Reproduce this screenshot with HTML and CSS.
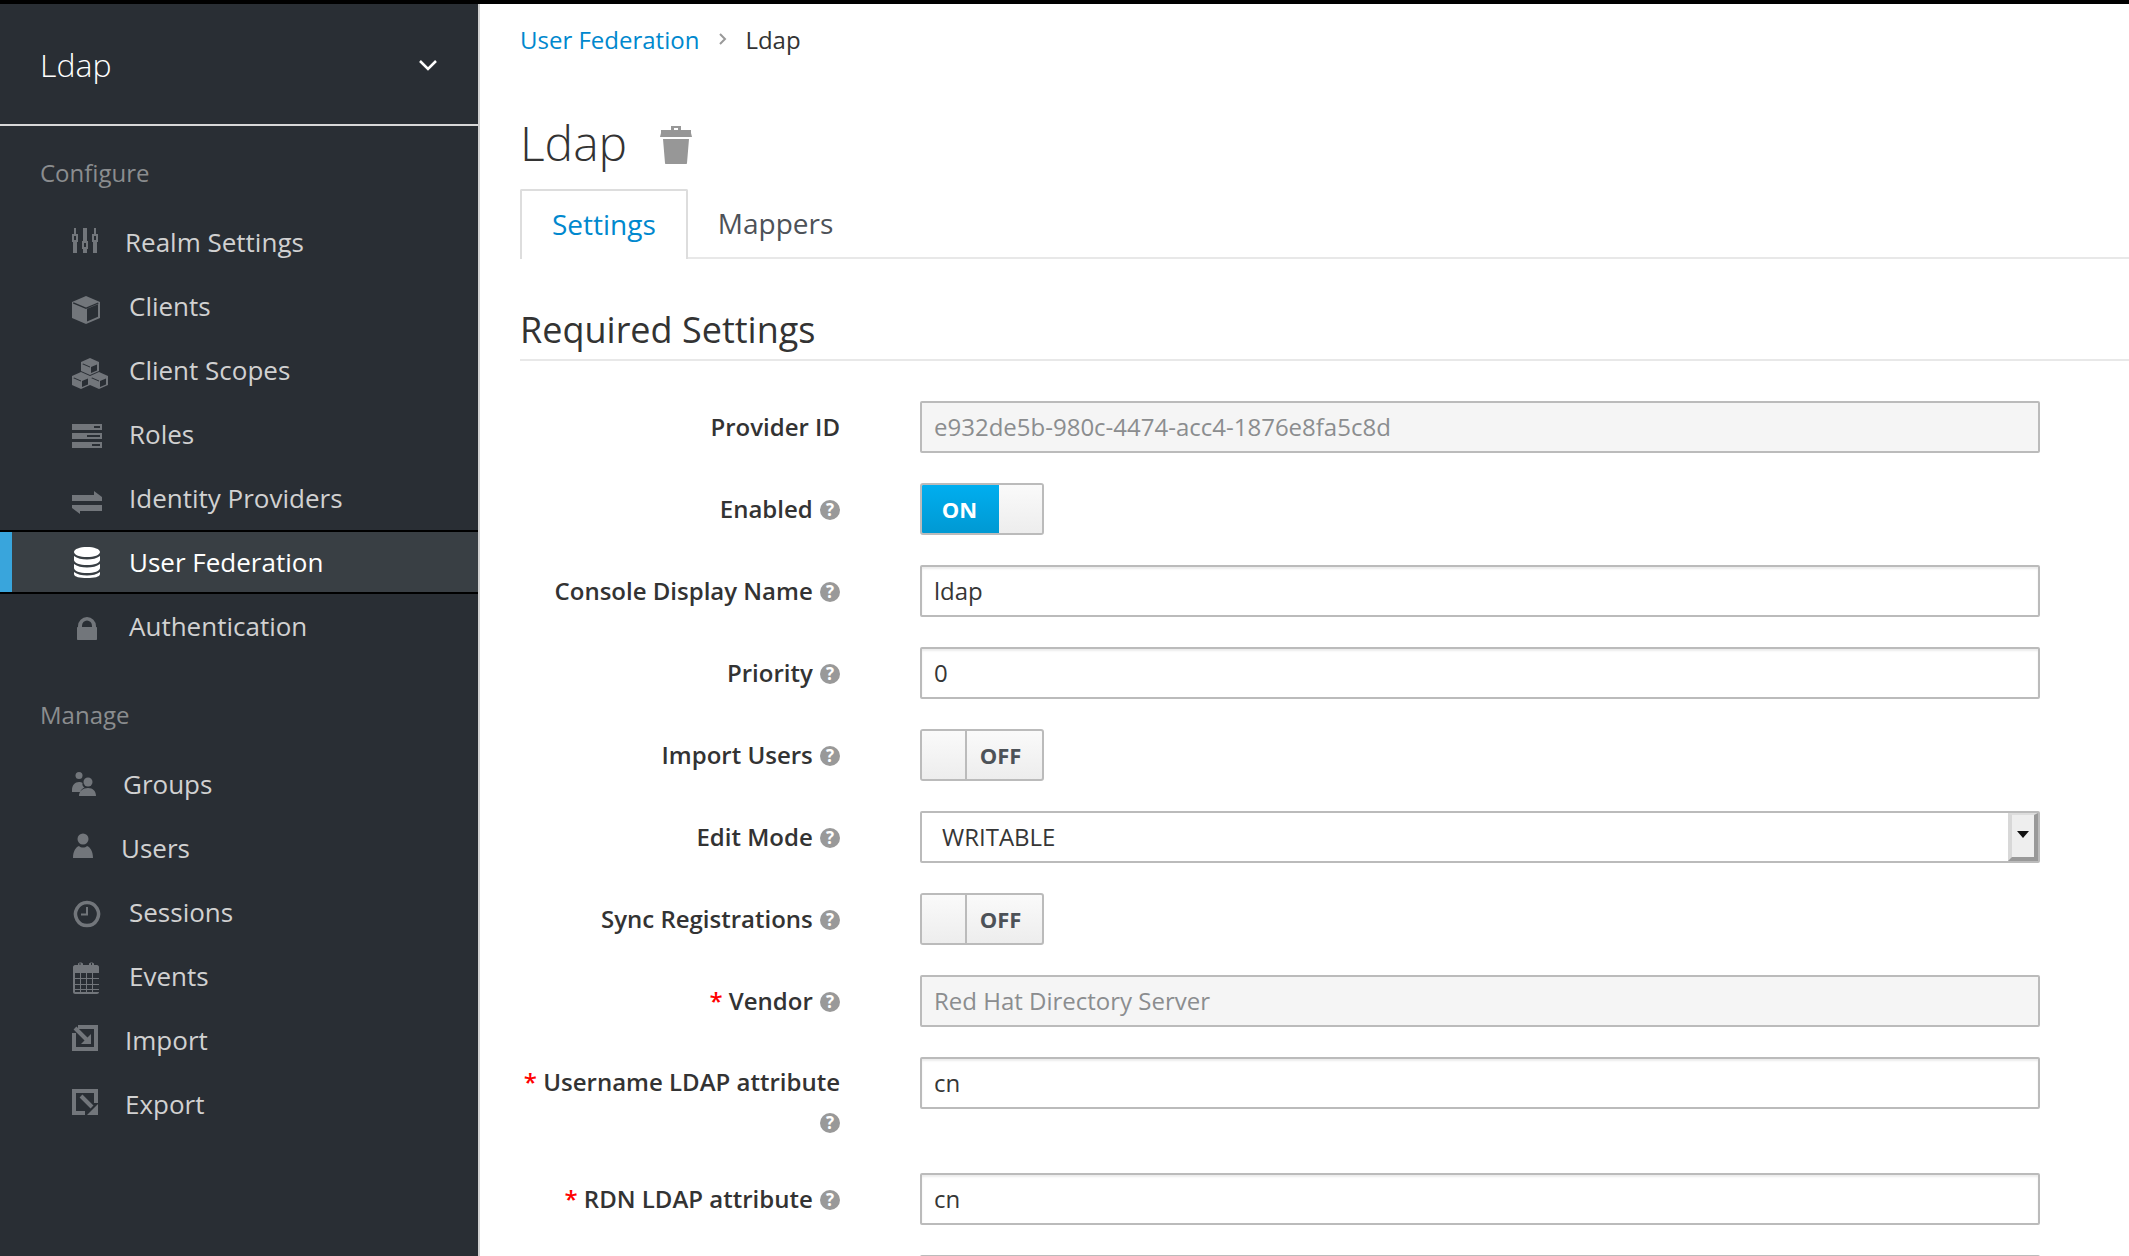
FILE: index.html
```html
<!DOCTYPE html>
<html>
<head>
    <title>Ldap</title>
    <link rel="stylesheet" href="styles.css">
</head>
<body>
    <div class="page">
        <aside class="sidebar">
            <div class="realm">
                <span class="realm-name">Ldap</span>
                <svg class="realm-caret" width="20" height="12" viewBox="0 0 20 12"><path d="M2 2l8 8 8-8" /></svg>
            </div>

            <div class="nav-section">
                <h2 class="nav-title">Configure</h2>
                <a class="nav-item gap-13">
                    <svg class="nav-icon" width="40" height="64" viewBox="0 0 40 64"><path d="M2 18h2v6H2zM0 24h6v8H0zM1 32h4v11H1zM11 18h4v13h-4zM10 31h6v8h-6zM11 39h4v4h-4zM22 18h2v6h-2zM20 24h6v8h-6zM21 32h4v11h-4z" /><path class="cut" d="M2 26h2v4H2zM12 33h2v4h-2zM22 26h2v4h-2z" /></svg>
                    Realm Settings
                </a>
                <a class="nav-item gap-17">
                    <svg class="nav-icon" width="40" height="64" viewBox="0 0 40 64"><path d="M14 22l14 6v16l-14 6-14-6V28z" /><path class="cut" d="M15 34.500l11-4.700v13l-11 4.700zM14 33.500L1.500 28.200l-.600 1.200L14 35zM14 33.500l.5 1.500 12-5-.5-1.500z" /></svg>
                    Clients
                </a>
                <a class="nav-item gap-17">
                    <svg class="nav-icon" width="40" height="64" viewBox="0 0 40 64"><path d="M18 20l9 4v9l-9 4-9-4v-9zM9 34l9 4v9l-9 4-9-4v-9zM27 34l9 4v9l-9 4-9-4v-9z" /><path class="cut" d="M19 29l6-2.600v6l-6 2.600zM10 43l6-2.600v6L10 49zM28 43l6-2.600v6L28 49zM9 42.500l-7-3-.600.800 7.600 3.300zM18 28.500l-7-3-.600.800 7.600 3.300zM27 42.500l-7-3-.600.800 7.600 3.300z" /></svg>
                    Client Scopes
                </a>
                <a class="nav-item gap-17">
                    <svg class="nav-icon" width="40" height="64" viewBox="0 0 40 64"><path d="M0 22h30v6H0zM0 31h30v6H0zM0 40h30v6H0z" /><path class="cut" d="M22 24h6v2h-6zM15 33h13v2H15zM20 42h8v2h-8z" /></svg>
                    Roles
                </a>
                <a class="nav-item gap-17">
                    <svg class="nav-icon" width="40" height="64" viewBox="0 0 40 64"><path d="M0 29h22v-4l8 6v4H0zM30 39v6H8v3l-8-6v-3z" /></svg>
                    Identity Providers
                </a>
                <a class="nav-item nav-item-active gap-17">
                    <svg class="nav-icon" width="40" height="64" viewBox="0 0 40 64"><path d="M15 17c7 0 13 2 13 5s-6 5-13 5-13-2-13-5 6-5 13-5zM2 26c3 2.500 8 3.500 13 3.500S25 28.500 28 26v4c0 3-6 5-13 5S2 33 2 30zM2 34c3 2.500 8 3.500 13 3.500S25 36.500 28 34v4c0 3-6 5-13 5S2 41 2 38zM2 42c3 2.500 8 3.500 13 3.500S25 44.500 28 42v2c0 3-6 4-13 4S2 47 2 44z" /></svg>
                    User Federation
                </a>
                <a class="nav-item gap-17">
                    <svg class="nav-icon" width="40" height="64" viewBox="0 0 40 64"><path d="M6 34v-2a9 9 0 0 1 18 0v2h-4v-2a5 5.500 0 0 0-10 0v2z" /><path d="M6 33h18c.600 0 1 .400 1 1v11c0 .600-.400 1-1 1H6c-.600 0-1-.400-1-1V34c0-.600.400-1 1-1z" /></svg>
                    Authentication
                </a>
            </div>

            <div class="nav-section">
                <h2 class="nav-title">Manage</h2>
                <a class="nav-item gap-11">
                    <svg class="nav-icon" width="40" height="64" viewBox="0 0 40 64"><circle cx="7" cy="23.500" r="3.500" /><circle cx="16" cy="30" r="4.500" /><path d="M0 38c0-5 3-8 7-8 1.500 0 2.500.400 3.500 1-.500 2 .500 4 2 4.500-2 1-3.500 2-4.500 4.500H0zM7 44c0-5 4-8 9-8s8 3 8 8z" /></svg>
                    Groups
                </a>
                <a class="nav-item gap-9">
                    <svg class="nav-icon" width="40" height="64" viewBox="0 0 40 64"><circle cx="11" cy="23" r="5.500" /><path d="M1 42c0-7 3-11 6-12 1 1 2.500 1.500 4 1.500s3-.500 4-1.500c3 1 6 5 6 12z" /></svg>
                    Users
                </a>
                <a class="nav-item gap-17">
                    <svg class="nav-icon" width="40" height="64" viewBox="0 0 40 64"><path class="line" d="M15 22.500a11.500 11.500 0 1 0 .010 0z" /><path class="thin" d="M15 27v7.500H9" /></svg>
                    Sessions
                </a>
                <a class="nav-item gap-17">
                    <svg class="nav-icon" width="40" height="64" viewBox="0 0 40 64"><path d="M3 21h3v-1c0-2 5-2 5 0v1h6v-1c0-2 5-2 5 0v1h3c1 0 2 1 2 2v25c0 1-1 2-2 2H3c-1 0-2-1-2-2V23c0-1 1-2 2-2z" /><path class="cut" d="M3 29h24v19H3z" /><path d="M8 29h1v19H8zM14 29h1v19h-1zM20 29h1v19h-1zM3 34h24v1H3zM3 40h24v1H3zM3 45h24v1H3z" /><path class="cut" d="M7.500 21h1v-2h-1zM19 21h1v-2h-1z" /></svg>
                    Events
                </a>
                <a class="nav-item gap-13">
                    <svg class="nav-icon" width="40" height="64" viewBox="0 0 40 64"><path d="M6 17h20v26H0V25h4v14h18V21H6z" /><path class="wire" d="M3 20l12 12" /><path d="M19 26v10H9z" /></svg>
                    Import
                </a>
                <a class="nav-item gap-13">
                    <svg class="nav-icon" width="40" height="64" viewBox="0 0 40 64"><path d="M0 17h26v14h-4V21H4v18h9v4H0z" /><path class="wire" d="M9 24l11 11" /><path d="M26 32v11H15z" /></svg>
                    Export
                </a>
            </div>
        </aside>

        <main class="content">
            <div class="breadcrumb">
                <a class="crumb-link">User Federation</a>
                <svg class="crumb-sep" width="10" height="14" viewBox="0 0 10 14"><path d="M2 2l5 5-5 5" /></svg>
                <span>Ldap</span>
            </div>

            <div class="page-title">
                <h1>Ldap</h1>
                <svg class="trash" width="32" height="38" viewBox="0 0 32 38"><path d="M11 0h10v4h10v3l1 4H0l1-4V4h10zM14 2v2h4V2zM3 13h26l-2 24c0 .600-.400 1-1 1H6c-.600 0-1-.400-1-1z" /></svg>
            </div>

            <ul class="tabs">
                <li class="tab tab-active">Settings</li>
                <li class="tab">Mappers</li>
            </ul>

            <h2 class="section-title">Required Settings</h2>

            <form class="form">
                <label class="field-label">Provider ID</label>
                <input class="field" type="text" value="e932de5b-980c-4474-acc4-1876e8fa5c8d" disabled>

                <label class="field-label">Enabled <span class="help">?</span></label>
                <div class="toggle toggle-on"><span class="toggle-text">ON</span><span class="toggle-handle"></span></div>

                <label class="field-label">Console Display Name <span class="help">?</span></label>
                <input class="field" type="text" value="ldap">

                <label class="field-label">Priority <span class="help">?</span></label>
                <input class="field" type="text" value="0">

                <label class="field-label">Import Users <span class="help">?</span></label>
                <div class="toggle"><span class="toggle-handle"></span><span class="toggle-text">OFF</span></div>

                <label class="field-label">Edit Mode <span class="help">?</span></label>
                <div class="select">WRITABLE<span class="select-btn"><span class="select-arrow"></span></span></div>

                <label class="field-label">Sync Registrations <span class="help">?</span></label>
                <div class="toggle"><span class="toggle-handle"></span><span class="toggle-text">OFF</span></div>

                <label class="field-label"><span class="req">*</span> Vendor <span class="help">?</span></label>
                <input class="field" type="text" value="Red Hat Directory Server" disabled>

                <label class="field-label field-label-wrap"><span class="req">*</span> Username LDAP attribute <span class="help">?</span></label>
                <input class="field" type="text" value="cn">

                <label class="field-label"><span class="req">*</span> RDN LDAP attribute <span class="help">?</span></label>
                <input class="field" type="text" value="cn">

                <label class="field-label"></label>
                <input class="field" type="text">
            </form>
        </main>
    </div>
</body>
</html>
```

FILE: styles.css
```css
html, body {
    margin: 0;
    height: 100%;
    overflow: hidden;
}

body {
    font-family: "Open Sans", "Noto Sans", Arial, sans-serif;
    background-color: #000;
    color: #333;
    font-size: 24px;
}

.page {
    display: flex;
    height: 1252px;
    margin-top: 4px;
    background-color: #fff;
}

/* sidebar */

.sidebar {
    width: 478px;
    flex-shrink: 0;
    background-color: #292e34;
    border-right: 2px solid #d1d1d1;
    color: #d1d1d1;
}

.realm {
    display: flex;
    align-items: center;
    justify-content: space-between;
    height: 120px;
    padding: 0 40px;
    border-bottom: 2px solid #d8d8d8;
}

.realm-name {
    font-size: 32px;
    font-weight: 300;
    color: #fff;
}

.realm-caret {
    margin-top: 1px;
}

.realm-caret path {
    fill: none;
    stroke: #fff;
    stroke-width: 2.5;
}

.nav-section + .nav-section {
    margin-top: 37px;
}

.nav-title {
    margin: 27px 0 17px 40px;
    height: 40px;
    line-height: 40px;
    font-size: 24px;
    font-weight: 400;
    color: #8b8d8f;
}

.nav-section + .nav-section .nav-title {
    margin-top: 0;
}

.nav-item {
    display: flex;
    align-items: center;
    height: 64px;
    padding-left: 72px;
    font-size: 26px;
    box-sizing: border-box;
}

.gap-9 .nav-icon { margin-right: 9px; }
.gap-11 .nav-icon { margin-right: 11px; }
.gap-13 .nav-icon { margin-right: 13px; }
.gap-17 .nav-icon { margin-right: 17px; }

.nav-icon {
    flex-shrink: 0;
    fill: #72767b;
}

.nav-icon .cut {
    fill: #292e34;
}

.nav-icon .line {
    fill: none;
    stroke: #72767b;
    stroke-width: 3.5;
}

.nav-icon .thin {
    fill: none;
    stroke: #72767b;
    stroke-width: 2;
}

.nav-icon .wire {
    fill: none;
    stroke: #72767b;
    stroke-width: 4;
}

.nav-item-active {
    position: relative;
    color: #fff;
    background-color: #393f44;
    border-top: 2px solid #000;
    border-bottom: 2px solid #000;
}

.nav-item-active::before {
    content: "";
    position: absolute;
    left: 0;
    top: 0;
    bottom: 0;
    width: 12px;
    background-color: #39a5dc;
}

.nav-item-active .nav-icon {
    fill: #fff;
}

/* main area */

.content {
    flex: 1;
    padding-left: 40px;
    min-width: 0;
}

.breadcrumb {
    display: flex;
    align-items: center;
    height: 70px;
}

.crumb-link {
    color: #0088ce;
}

.crumb-sep {
    margin: 0 17px 0 19px;
}

.crumb-sep path {
    fill: none;
    stroke: #999;
    stroke-width: 2;
}

.page-title {
    display: flex;
    align-items: center;
    height: 60px;
    margin: 38px 0 17px;
}

.page-title h1 {
    margin: 0;
    font-size: 48px;
    font-weight: 300;
}

.trash {
    margin: 6px 0 0 33px;
    fill: #979797;
}

.tabs {
    display: flex;
    height: 70px;
    margin: 0;
    padding: 0;
    list-style: none;
    border-bottom: 2px solid #e8e8e8;
    box-sizing: border-box;
}

.tab {
    height: 70px;
    padding: 0 30px;
    line-height: 68px;
    font-size: 28px;
    color: #4d5258;
    box-sizing: border-box;
}

.tab-active {
    color: #0088ce;
    background-color: #fff;
    border: 2px solid #ddd;
    border-bottom: none;
    border-radius: 2px 2px 0 0;
    line-height: 66px;
}

.section-title {
    margin: 46px 0 0;
    height: 50px;
    padding-bottom: 4px;
    line-height: 50px;
    font-size: 36px;
    font-weight: 400;
    border-bottom: 2px solid #e8e8e8;
}

.form {
    display: grid;
    grid-template-columns: 320px 1120px;
    grid-auto-rows: auto;
    align-items: start;
    column-gap: 80px;
    row-gap: 30px;
    margin-top: 40px;
}

.field-label {
    display: block;
    padding-top: 7px;
    line-height: 38px;
    text-align: right;
    font-weight: 600;
    font-size: 24px;
}

.field-label-wrap {
    height: 81px;
    padding-top: 5px;
    line-height: 40px;
}

.req {
    color: #f00;
}

.help {
    display: inline-block;
    width: 20px;
    height: 20px;
    margin-left: 1px;
    border-radius: 50%;
    background-color: #999;
    color: #fff;
    font-size: 17px;
    font-weight: 700;
    line-height: 20px;
    text-align: center;
    vertical-align: 2px;
}

.field {
    display: block;
    width: 100%;
    height: 52px;
    padding: 0 12px 2px;
    margin: 0;
    box-sizing: border-box;
    border: 2px solid #bbb;
    border-radius: 2px;
    box-shadow: inset 0 2px 2px rgba(3, 3, 3, 0.08);
    background-color: #fff;
    color: #363636;
    font-family: inherit;
    font-size: 24px;
}

.field:disabled {
    background-color: #f5f5f5;
    color: #8b8d8f;
    box-shadow: none;
}

.toggle {
    display: flex;
    width: 124px;
    height: 52px;
    box-sizing: border-box;
    border: 2px solid #bbb;
    border-radius: 3px;
    background-image: linear-gradient(#fafafa, #ededed);
    overflow: hidden;
}

.toggle-text {
    flex: 1;
    padding-right: 8px;
    text-align: center;
    line-height: 48px;
    font-size: 22px;
    font-weight: 700;
    color: #4d5258;
}

.toggle-handle {
    width: 43px;
    background-image: linear-gradient(#fafafa, #ededed);
    border-right: 2px solid #bbb;
}

.toggle-on .toggle-text {
    padding-right: 2px;
    color: #fff;
    background-image: linear-gradient(#00aeef, #0099d3);
}

.toggle-on .toggle-handle {
    border-right: none;
}

.select {
    position: relative;
    height: 52px;
    padding-left: 20px;
    box-sizing: border-box;
    border: 2px solid #bbb;
    border-radius: 2px;
    line-height: 48px;
    color: #363636;
}

.select-btn {
    position: absolute;
    top: 0;
    right: 0;
    bottom: 0;
    width: 22px;
    background-color: #eee;
    border-style: solid;
    border-width: 2px 4px 4px 4px;
    border-color: #ddd #999 #999 #d8d8d8;
}

.select-arrow {
    position: absolute;
    left: 5px;
    top: 16px;
    border-style: solid;
    border-width: 7px 6px 0 6px;
    border-color: #111 transparent transparent transparent;
}
```
